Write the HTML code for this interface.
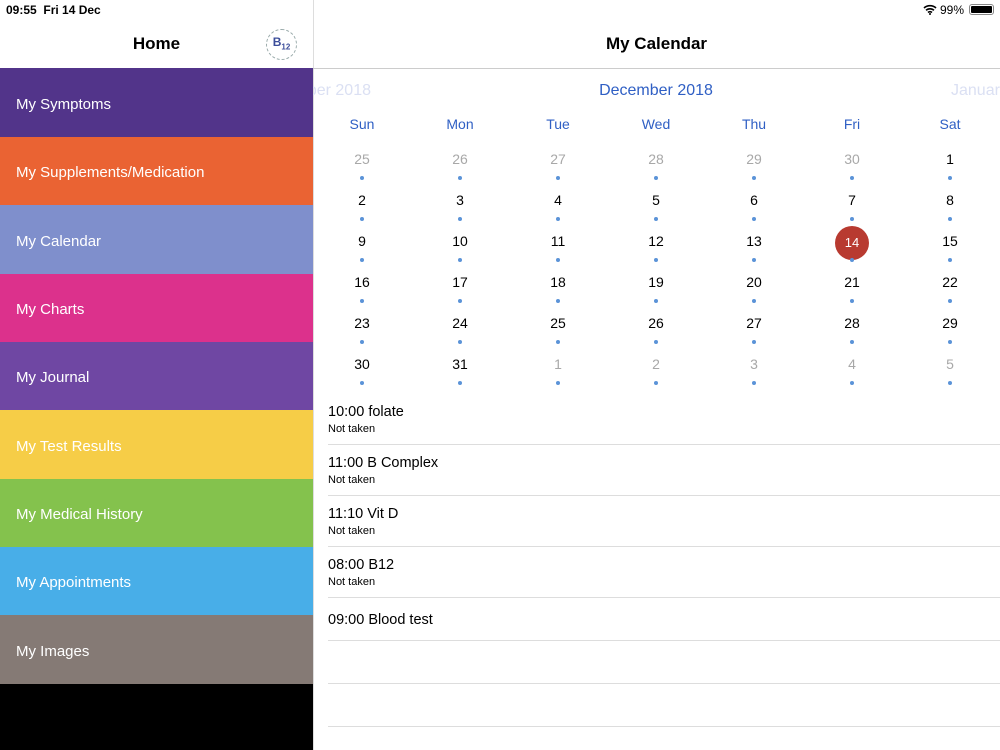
<!DOCTYPE html>
<html><head><meta charset="utf-8"><style>
*{margin:0;padding:0;box-sizing:border-box}
body{width:1000px;height:750px;overflow:hidden;background:#fff;font-family:"Liberation Sans",Arial,sans-serif;position:relative;color:#000}
.a{position:absolute}
.menu div{position:absolute;left:0;width:313px;color:#fff;font-size:15px;padding-left:16px;padding-top:3px;display:flex;align-items:center}
.c{position:absolute;width:60px;text-align:center;font-size:14px}
.d{position:absolute;width:4px;height:4px;border-radius:50%;background:#5b93d8}
.g{color:#a8a8a8}
.sep{position:absolute;left:328px;right:0;height:1px;background:#ddd}
.ev{position:absolute;left:328px;font-size:14.5px}
.ev small{display:block;font-size:11px;margin-top:3px}
</style></head><body>
<div class="a" style="left:6px;top:3px;font-size:12px;font-weight:bold">09:55&nbsp;&nbsp;Fri 14 Dec</div>
<div class="a" style="right:36px;top:3px;font-size:12px">
<svg width="14" height="11" viewBox="0 0 14 11" style="vertical-align:-1px"><path d="M1 4a9 9 0 0 1 12 0M3 6.3a6 6 0 0 1 8 0M5 8.5a3 3 0 0 1 4 0" stroke="#000" stroke-width="1.6" fill="none"/><circle cx="7" cy="10" r="1" fill="#000"/></svg> 99%</div>
<div class="a" style="right:6px;top:4px;width:25px;height:11px;border:1px solid #888;border-radius:3px;padding:1px"><div style="background:#000;width:100%;height:100%;border-radius:1px"></div></div>
<div class="a" style="left:0;top:34px;width:313px;text-align:center;font-size:17px;font-weight:bold">Home</div>
<div class="a" style="left:266px;top:29px;width:31px;height:31px;border-radius:50%;border:1px dashed #9aa;text-align:center;color:#3b4d9a;font-size:12px;font-weight:bold;line-height:24px">B<sub style="font-size:8px">12</sub></div>
<div class="a" style="left:313px;top:0;width:1px;height:750px;background:#ddd"></div>
<div class="a" style="left:313px;top:34px;width:687px;text-align:center;font-size:17px;font-weight:bold">My Calendar</div>
<div class="a" style="left:313px;top:68px;width:687px;height:1px;background:#ccc"></div>
<div class="menu">
<div style="top:68px;height:69px;background:#52348a">My Symptoms</div>
<div style="top:137px;height:68px;background:#ea6333">My Supplements/Medication</div>
<div style="top:205px;height:69px;background:#7f8fcc">My Calendar</div>
<div style="top:274px;height:68px;background:#dc318c">My Charts</div>
<div style="top:342px;height:68px;background:#6f47a3">My Journal</div>
<div style="top:410px;height:69px;background:#f6cd47">My Test Results</div>
<div style="top:479px;height:68px;background:#84c24d">My Medical History</div>
<div style="top:547px;height:68px;background:#48aee8">My Appointments</div>
<div style="top:615px;height:69px;background:#857a75">My Images</div>
<div style="top:684px;height:66px;background:#000"></div>
</div>
<div class="a" style="left:313px;top:82px;width:58px;overflow:hidden;font-size:16px;color:#dbe0f3;white-space:nowrap;direction:rtl">November 2018</div>
<div class="a" style="left:556px;top:82px;width:200px;text-align:center;font-size:16px;color:#2f5fc4">December 2018</div>
<div class="a" style="left:951px;top:82px;font-size:16px;color:#dbe0f3;white-space:nowrap">January</div>
<div id="cal"></div>
<div class="ev" style="top:404px">10:00 folate<small>Not taken</small></div>
<div class="sep" style="top:444px"></div>
<div class="ev" style="top:455px">11:00 B Complex<small>Not taken</small></div>
<div class="sep" style="top:495px"></div>
<div class="ev" style="top:506px">11:10 Vit D<small>Not taken</small></div>
<div class="sep" style="top:546px"></div>
<div class="ev" style="top:557px">08:00 B12<small>Not taken</small></div>
<div class="sep" style="top:597px"></div>
<div class="ev" style="top:612px">09:00 Blood test</div>
<div class="sep" style="top:640px"></div>
<div class="sep" style="top:683px"></div>
<div class="sep" style="top:726px"></div>
<script>
var h='',days=['Sun','Mon','Tue','Wed','Thu','Fri','Sat'];
days.forEach(function(d,i){h+='<div class="c" style="left:'+(332+98*i)+'px;top:116px;color:#2f5fc4">'+d+'</div>'});
var nums=[25,26,27,28,29,30,1];for(var n=2;n<=31;n++)nums.push(n);nums.push(1,2,3,4,5);
nums.forEach(function(n,k){var r=Math.floor(k/7),c=k%7,x=362+98*c,y=151+41*r;
var gr=(k<6||k>36);
if(n==14&&!gr){h+='<div class="a" style="left:'+(x-17)+'px;top:'+(y-7)+'px;width:34px;height:34px;border-radius:50%;background:#b83a30;color:#fff;text-align:center;line-height:34px;font-size:13px">14</div>'}
else h+='<div class="c'+(gr?' g':'')+'" style="left:'+(x-30)+'px;top:'+y+'px">'+n+'</div>';
h+='<div class="d" style="left:'+(x-2)+'px;top:'+(y+25)+'px"></div>'});
document.getElementById('cal').innerHTML=h;
</script>
</body></html>
